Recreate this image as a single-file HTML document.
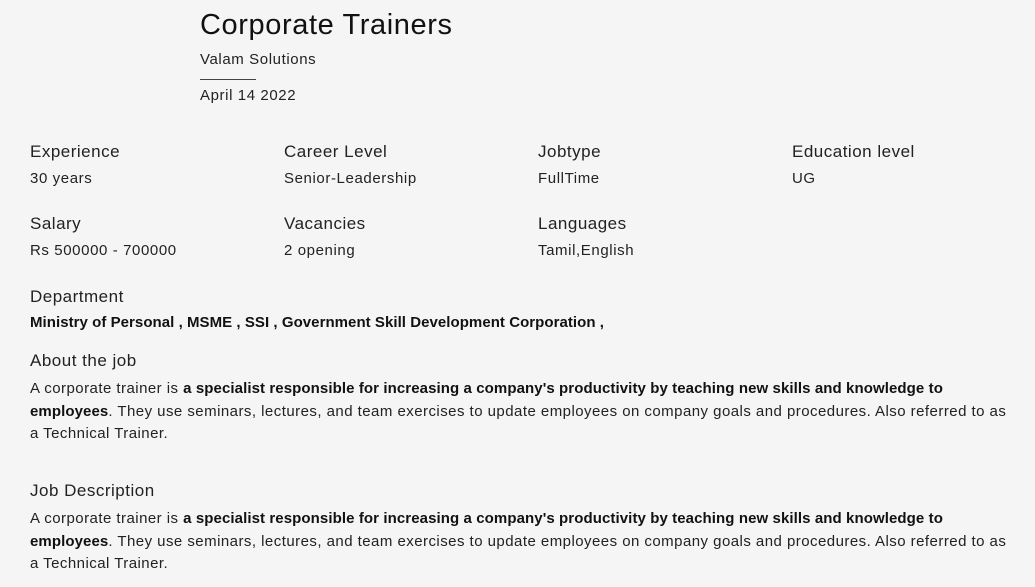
<!DOCTYPE html>
<html><head><meta charset="utf-8"><style>
body{margin:0;width:1035px;height:587px;background:#f5f5f5;font-family:"Liberation Sans",Arial,sans-serif;color:#1a1a1a;position:relative;overflow:hidden}
.a{position:absolute;white-space:nowrap}
h1{position:absolute;left:200px;top:9px;margin:0;font-weight:400;font-size:29px;color:#111;letter-spacing:0.6px}
.lab{font-size:17px;color:#222;letter-spacing:0.5px}
.val{font-size:15px;color:#222;letter-spacing:0.6px}
.val b{letter-spacing:0.05px}
.p{position:absolute;left:30px;font-size:15px;line-height:22.5px;color:#222;white-space:nowrap;letter-spacing:0.46px}
.p b{letter-spacing:0.09px}
b{font-weight:700;color:#111}
</style></head><body>
<h1>Corporate Trainers</h1>
<div class="a val" style="left:200px;top:51px">Valam Solutions</div>
<div class="a" style="left:200px;top:79px;width:56px;height:1px;background:#444"></div>
<div class="a val" style="left:200px;top:87px">April 14 2022</div>

<div class="a lab" style="left:30px;top:142px">Experience</div>
<div class="a val" style="left:30px;top:170px">30 years</div>
<div class="a lab" style="left:284px;top:142px">Career Level</div>
<div class="a val" style="left:284px;top:170px">Senior-Leadership</div>
<div class="a lab" style="left:538px;top:142px">Jobtype</div>
<div class="a val" style="left:538px;top:170px">FullTime</div>
<div class="a lab" style="left:792px;top:142px">Education level</div>
<div class="a val" style="left:792px;top:170px">UG</div>

<div class="a lab" style="left:30px;top:214px">Salary</div>
<div class="a val" style="left:30px;top:242px">Rs 500000 - 700000</div>
<div class="a lab" style="left:284px;top:214px">Vacancies</div>
<div class="a val" style="left:284px;top:242px">2 opening</div>
<div class="a lab" style="left:538px;top:214px">Languages</div>
<div class="a val" style="left:538px;top:242px">Tamil,English</div>

<div class="a lab" style="left:30px;top:287px">Department</div>
<div class="a val" style="left:30px;top:314px"><b>Ministry of Personal , MSME , SSI , Government Skill Development Corporation ,</b></div>

<div class="a lab" style="left:30px;top:351px">About the job</div>
<div class="p" style="top:378px">A corporate trainer is <b>a specialist responsible for increasing a company's productivity by teaching new skills and knowledge to</b><br><b>employees</b>. They use seminars, lectures, and team exercises to update employees on company goals and procedures. Also referred to as<br>a Technical Trainer.</div>

<div class="a lab" style="left:30px;top:481px">Job Description</div>
<div class="p" style="top:508px">A corporate trainer is <b>a specialist responsible for increasing a company's productivity by teaching new skills and knowledge to</b><br><b>employees</b>. They use seminars, lectures, and team exercises to update employees on company goals and procedures. Also referred to as<br>a Technical Trainer.</div>
</body></html>
